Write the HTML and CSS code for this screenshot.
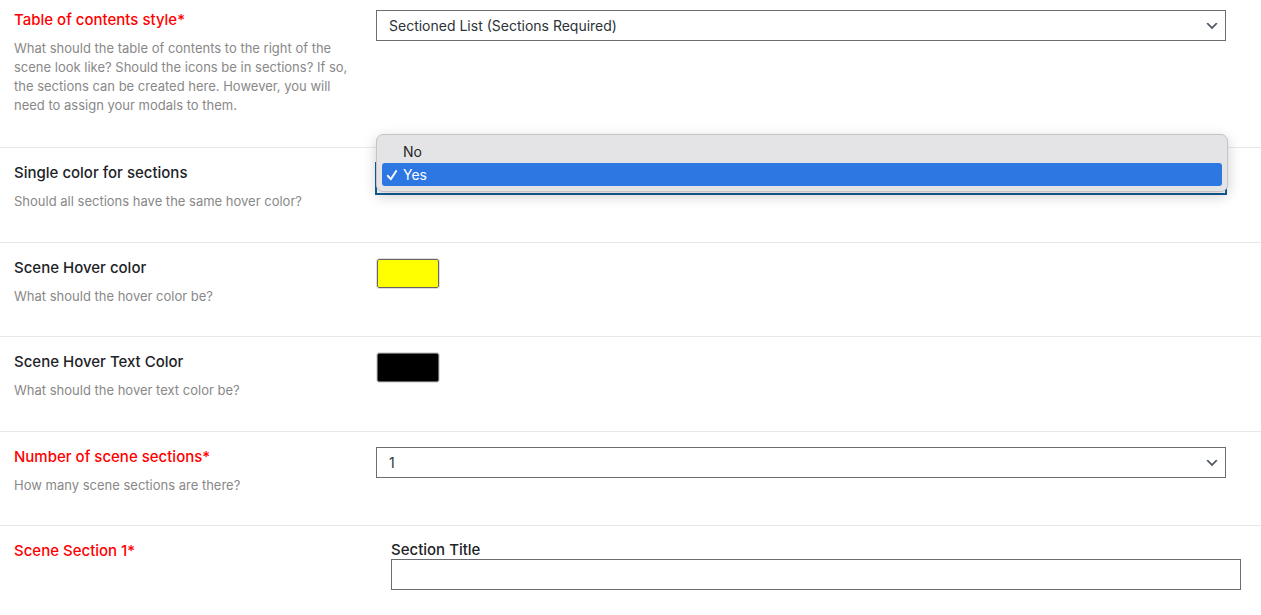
FILE: index.html
```html
<!DOCTYPE html>
<html lang="en">
<head>
<meta charset="utf-8">
<title>Scene settings</title>
<link rel="stylesheet" href="styles.css">
</head>
<body>
<form class="fields">
  <div class="field field-first">
    <div class="field-info">
      <label class="field-label required" for="toc-style">Table of contents style*</label>
      <p class="field-desc">What should the table of contents to the right of the scene look like? Should the icons be in sections? If so, the sections can be created here. However, you will need to assign your modals to them.</p>
    </div>
    <div class="control">
      <select class="input" id="toc-style"><option>Sectioned List (Sections Required)</option></select>
      <svg class="chevron" viewBox="0 0 20 20" aria-hidden="true"><path d="M5 6l5 5 5-5 2 1-7 7-7-7z"/></svg>
    </div>
  </div>

  <div class="field">
    <div class="field-info">
      <label class="field-label" for="single-color">Single color for sections</label>
      <p class="field-desc">Should all sections have the same hover color?</p>
    </div>
    <div class="control">
      <select class="input input-active" id="single-color"><option>No</option><option selected>Yes</option></select>
      <ul class="menu" role="listbox" aria-label="Single color for sections">
        <li class="menu-item" role="option" aria-selected="false">No</li>
        <li class="menu-item menu-item-selected" role="option" aria-selected="true"><svg class="check" viewBox="0 0 12 12" aria-hidden="true"><path d="M1.8 6.8l3 3.4L10.2 2"/></svg>Yes</li>
      </ul>
    </div>
  </div>

  <div class="field field-compact">
    <div class="field-info">
      <label class="field-label" for="hover-color">Scene Hover color</label>
      <p class="field-desc">What should the hover color be?</p>
    </div>
    <div class="control"><input class="swatch" id="hover-color" type="color" value="#ffff00"></div>
  </div>

  <div class="field">
    <div class="field-info">
      <label class="field-label" for="hover-text-color">Scene Hover Text Color</label>
      <p class="field-desc">What should the hover text color be?</p>
    </div>
    <div class="control"><input class="swatch" id="hover-text-color" type="color" value="#000000"></div>
  </div>

  <div class="field field-compact">
    <div class="field-info">
      <label class="field-label required" for="section-count">Number of scene sections*</label>
      <p class="field-desc">How many scene sections are there?</p>
    </div>
    <div class="control">
      <select class="input" id="section-count"><option>1</option></select>
      <svg class="chevron" viewBox="0 0 20 20" aria-hidden="true"><path d="M5 6l5 5 5-5 2 1-7 7-7-7z"/></svg>
    </div>
  </div>

  <div class="field field-group">
    <div class="field-info"><span class="field-label required">Scene Section 1*</span></div>
    <div class="control">
      <label class="sub-label" for="section-title">Section Title</label>
      <input class="input" id="section-title" type="text">
    </div>
  </div>
</form>
</body>
</html>
```

FILE: styles.css
```css
* {
  box-sizing: border-box;
}

body {
  margin: 0;
  background: #fff;
  color: #1d2327;
  font-family: Inter, "Liberation Sans", sans-serif;
  font-size: 14px;
}

.field {
  display: grid;
  grid-template-columns: 340px 1fr;
  column-gap: 22px;
  padding: 15px 35px 31px 14px;
  border-bottom: 1px solid #e8e8e8;
}

.field-first {
  padding-top: 10px;
  padding-bottom: 32px;
}

.field-compact {
  padding-bottom: 30px;
}

.field-group {
  column-gap: 37px;
  padding-right: 20px;
  border-bottom: 0;
}

.field-label {
  display: block;
  font-size: 15px;
  font-weight: 500;
  line-height: 20px;
}

.required {
  color: #f00;
}

.field-desc {
  margin: 9px 0 0;
  color: #888;
  font-size: 13px;
  line-height: 19px;
}

.control {
  position: relative;
}

.input {
  display: block;
  width: 100%;
  height: 31px;
  margin: 0;
  padding: 0 32px 0 12px;
  border: 1px solid #6c6d70;
  border-radius: 0;
  outline: 0;
  background: #fff;
  color: #2c3338;
  font: inherit;
  appearance: none;
}

.input-active {
  border-color: #135e96;
  box-shadow: 0 0 0 1px #135e96;
}

.chevron {
  position: absolute;
  top: 8px;
  right: 6px;
  width: 16px;
  height: 16px;
  fill: #50575e;
  pointer-events: none;
}

.menu {
  position: absolute;
  z-index: 1;
  top: -29px;
  right: -2px;
  left: 0;
  margin: 0;
  padding: 5px;
  border: 1px solid #c4c4c6;
  border-radius: 7px;
  background: #e4e4e6;
  box-shadow: 0 4px 14px rgba(0, 0, 0, 0.2);
  list-style: none;
}

.menu-item {
  position: relative;
  padding-left: 21px;
  border-radius: 3px;
  color: #262626;
  line-height: 23px;
}

.menu-item-selected {
  background: #2d77e2;
  color: #fff;
}

.check {
  position: absolute;
  top: 6px;
  left: 4px;
  width: 12px;
  height: 12px;
  fill: none;
  stroke: #fff;
  stroke-width: 2;
  stroke-linecap: round;
  stroke-linejoin: round;
}

.swatch {
  display: block;
  width: 64px;
  height: 31px;
  margin: 0;
  padding: 0;
  border: 1px solid #ddd;
  border-radius: 3px;
  background: #fff;
  appearance: none;
}

.swatch::-webkit-color-swatch-wrapper {
  padding: 0;
}

.swatch::-webkit-color-swatch {
  border: 1px solid #666;
  border-radius: 2px;
}

.sub-label {
  display: block;
  font-size: 15px;
  font-weight: 500;
  line-height: 18px;
}
```
